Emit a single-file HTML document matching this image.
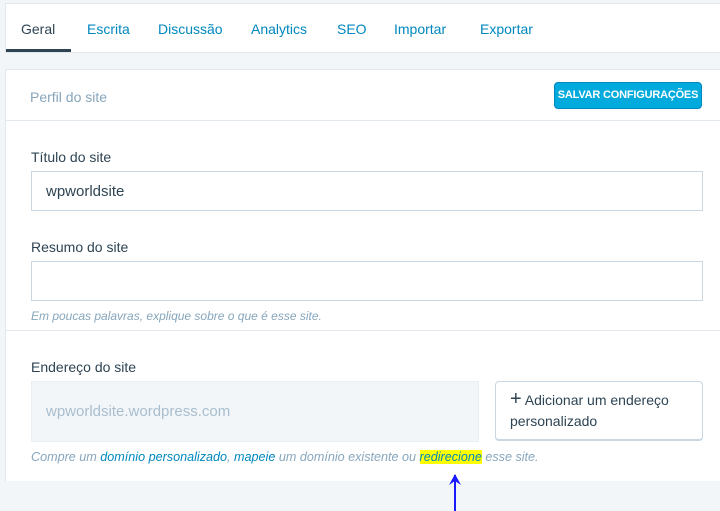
<!DOCTYPE html>
<html><head><style>
*{margin:0;padding:0;box-sizing:border-box}
body{width:720px;height:511px;background:#f3f6f8;font-family:"Liberation Sans",sans-serif;position:relative;overflow:hidden}
.tabs{position:absolute;left:5px;top:3px;width:715px;height:50px;background:#fff;border:1px solid #e1e7ec;border-right:none}
.tab{position:absolute;top:17px;font-size:14px;color:#0087be}
.card{position:absolute;left:5px;top:69px;width:715px;height:412px;background:#fff;border:1px solid #e1e7ec;border-right:none;border-bottom:none}
.t{position:absolute;font-size:14px}
.inp{position:absolute;left:25px;width:672px;height:40px;border:1px solid #c8d7e1;background:#fff}
</style></head><body>
<div class="tabs">
<span class="tab" style="left:15px;color:#2e4453">Geral</span>
<div style="position:absolute;left:0;top:45px;width:65px;height:3px;background:#2e4453"></div>
<span class="tab" style="left:81px">Escrita</span>
<span class="tab" style="left:152px">Discussão</span>
<span class="tab" style="left:245px">Analytics</span>
<span class="tab" style="left:331px">SEO</span>
<span class="tab" style="left:388px">Importar</span>
<span class="tab" style="left:474px">Exportar</span>
</div>
<div class="card">
<span class="t" style="left:24px;top:19px;color:#87a6bc">Perfil do site</span>
<div style="position:absolute;left:548px;top:12px;width:148px;height:27px;background:#00aadc;border:1px solid #0087be;border-radius:4px;color:#fff;font-size:11px;font-weight:bold;text-align:center;line-height:25px;letter-spacing:-0.2px">SALVAR CONFIGURAÇÕES</div>
<div style="position:absolute;left:0;top:50px;width:715px;height:1px;background:#e1e7ec"></div>
<span class="t" style="left:25px;top:79px;color:#2e4453">Título do site</span>
<div class="inp" style="top:101px"><span class="t" style="left:14px;top:11px;font-size:15px;color:#2e4453">wpworldsite</span></div>
<span class="t" style="left:25px;top:169px;color:#2e4453">Resumo do site</span>
<div class="inp" style="top:191px"></div>
<span class="t" style="left:25px;top:239px;font-size:12px;font-style:italic;color:#87a6bc">Em poucas palavras, explique sobre o que é esse site.</span>
<div style="position:absolute;left:0;top:260px;width:715px;height:1px;background:#e1e7ec"></div>
<span class="t" style="left:25px;top:289px;color:#2e4453">Endereço do site</span>
<div style="position:absolute;left:25px;top:311px;width:448px;height:61px;background:#f3f6f8;border:1px solid #e9eff3"><span class="t" style="left:14px;top:21px;font-size:15px;color:#a8bece">wpworldsite.wordpress.com</span></div>
<div style="position:absolute;left:489px;top:311px;width:208px;height:60px;border:1px solid #c8d7e1;border-bottom-width:2px;border-radius:4px;font-size:14px;color:#2e4453;padding:8px 0 0 14px;line-height:21px"><span style="font-size:20px;line-height:18px">+</span> Adicionar um endereço personalizado</div>
<span class="t" style="left:25px;top:380px;font-size:12.6px;font-style:italic;color:#87a6bc">Compre um <span style="color:#0087be">domínio personalizado</span>, <span style="color:#0087be">mapeie</span> um domínio existente ou <span style="color:#0087be;background:#ffff00">redirecione</span> esse site.</span>
</div>
<svg style="position:absolute;left:445px;top:472px" width="20" height="39"><path d="M10 3V39" stroke="#1a1aff" stroke-width="2"/><path d="M4 13L10 2L16 13L10 9Z" fill="#1a1aff"/></svg>
</body></html>
